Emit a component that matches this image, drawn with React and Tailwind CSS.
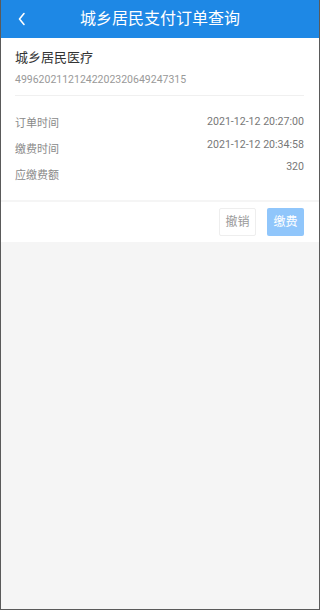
import React from "react";

export default function App() {
  const rows = [
    { label: "订单时间", value: "2021-12-12 20:27:00" },
    { label: "缴费时间", value: "2021-12-12 20:34:58" },
    { label: "应缴费额", value: "320" },
  ];

  return (
    <div
      className="w-[320px] h-[610px] bg-[#f5f5f5] border-x border-b border-[#5a5a5a] flex flex-col"
      style={{ fontFamily: 'Roboto, "Noto Sans CJK SC", sans-serif' }}
    >
      {/* Header */}
      <div className="h-[38px] bg-[#1e88e5] flex items-center relative shrink-0">
        <svg
          className="absolute left-[16px] top-[12px]"
          width="10"
          height="14"
          viewBox="0 0 10 14"
          fill="none"
        >
          <path d="M7 1.5L2.5 7L7 12.5" stroke="#fff" strokeWidth="1.6" strokeLinecap="round" strokeLinejoin="round" />
        </svg>
        <h1 className="w-full text-center text-white text-[16px] leading-none">城乡居民支付订单查询</h1>
      </div>

      {/* Order info */}
      <div className="bg-white pl-[14px] pr-[15px]">
        <div className="pt-[10px] text-[13px] leading-[20px] text-[#333]">城乡居民医疗</div>
        <div className="mt-[3px] text-[10.5px] leading-[18px] text-[#999]">49962021121242202320649247315</div>
        <div className="mt-[6px] h-px bg-[#f0f0f0]" />
        <div className="flex justify-between pt-[15px] pb-[11px]">
          <div className="flex flex-col">
            {rows.map((r) => (
              <span key={r.label} className="text-[11px] leading-[26px] text-[#8a8a8a]">
                {r.label}
              </span>
            ))}
          </div>
          <div className="flex flex-col items-end">
            {rows.map((r) => (
              <span key={r.label} className="text-[10.6px] leading-[22.5px] text-[#777]">
                {r.value}
              </span>
            ))}
          </div>
        </div>
      </div>

      {/* Actions */}
      <div className="mt-[2px] bg-white h-[40px] flex items-center justify-end gap-[11px] pr-[15px]">
        <button className="w-[37px] h-[28px] border border-[#eeeeee] rounded-[2px] bg-white text-[12px] text-[#999]">
          撤销
        </button>
        <button className="w-[37px] h-[28px] rounded-[2px] bg-[#90c6fb] text-[12px] text-white">
          缴费
        </button>
      </div>
    </div>
  );
}
